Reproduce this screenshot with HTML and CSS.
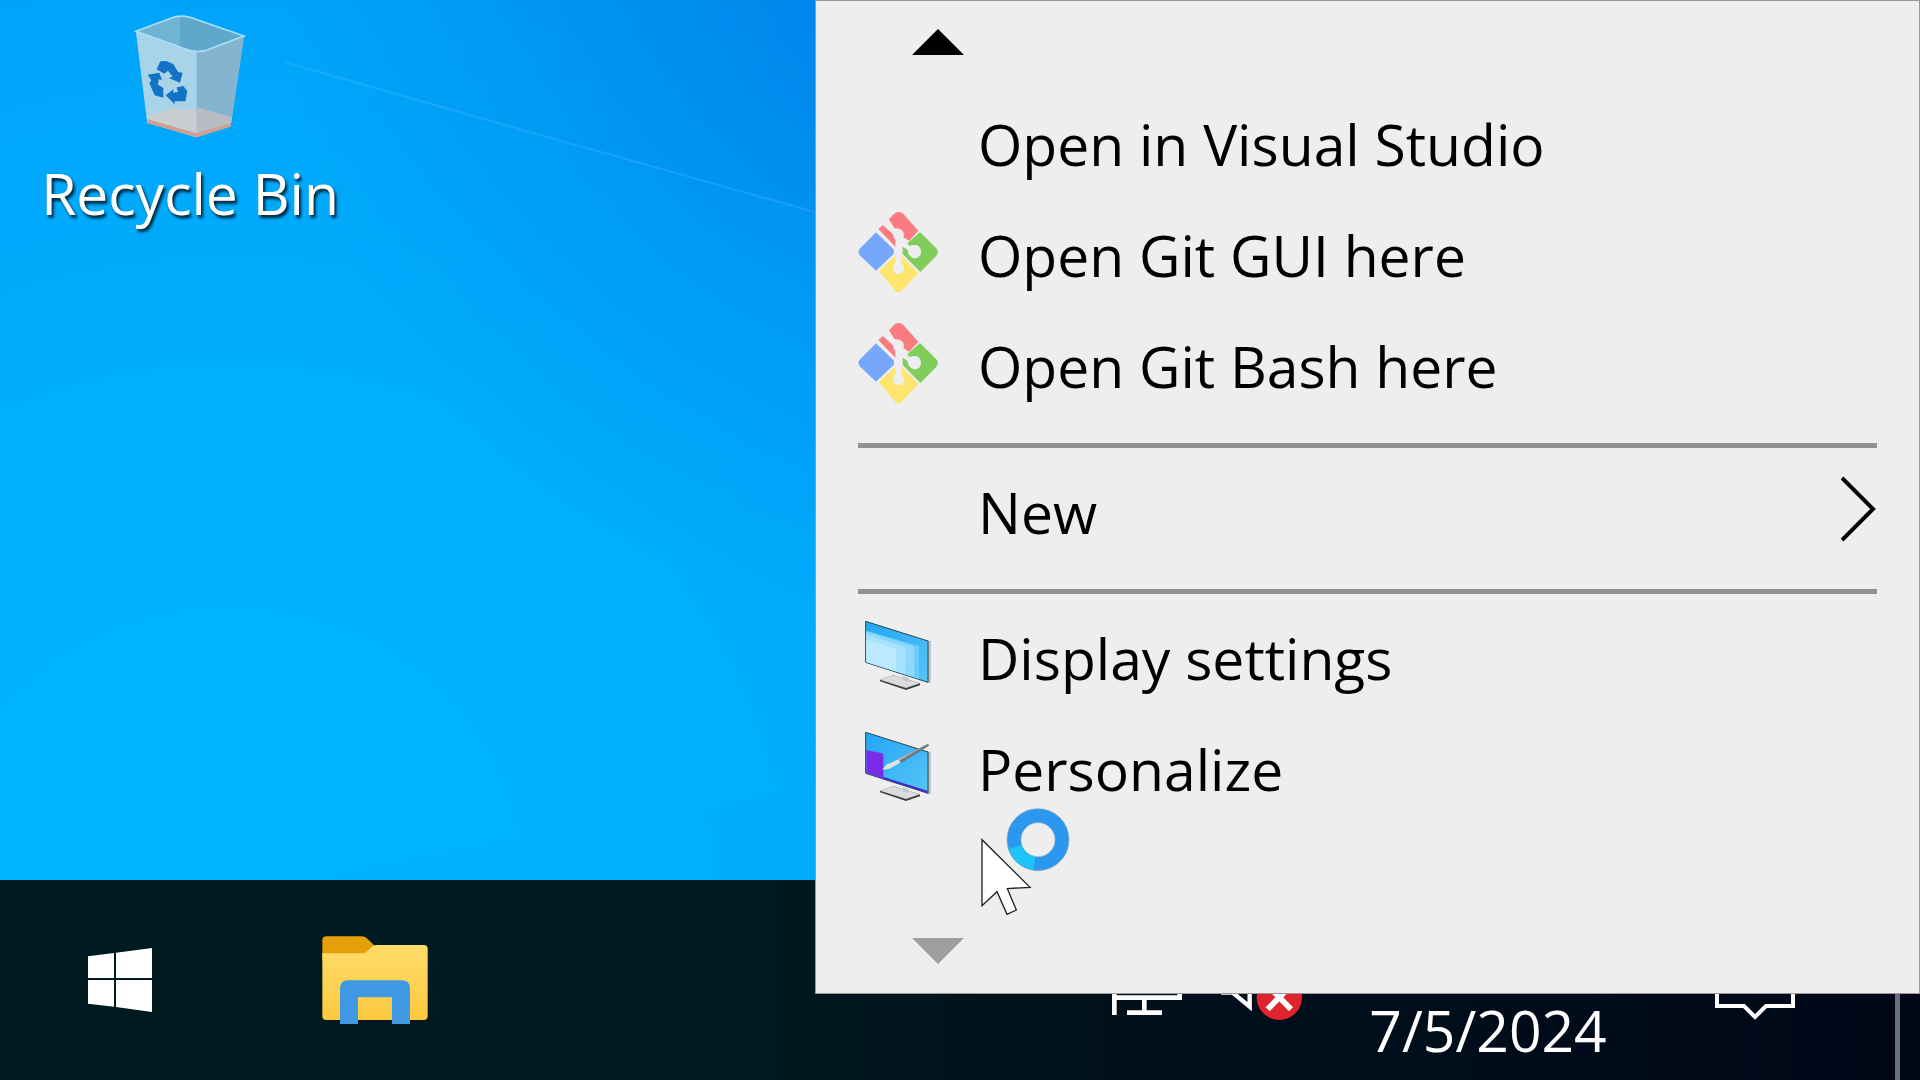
FILE: index.html
```html
<!DOCTYPE html>
<html lang="en">
<head>
  <meta charset="UTF-8" />
  <meta name="viewport" content="width=device-width, initial-scale=1.0" />
  <title>Desktop</title>
  <link rel="stylesheet" href="styles.css">
</head>
<body>

  <main class="desktop">
    <svg class="light-rays" viewBox="0 0 830 880" preserveAspectRatio="none" aria-hidden="true">
      <path d="M0 0H150L286 62L529 131L830 215V880H0Z" fill="#00b4ff" opacity=".1" />
      <path d="M286 62L529 131L830 215" fill="none" stroke="#5cc4ff" stroke-width="2" opacity=".25" />
      <path d="M300 880L830 785V880Z" fill="#0098f0" opacity=".08" />
    </svg>

    <a class="shortcut" href="#recycle-bin">
      <svg class="shortcut-icon" viewBox="399 39 342 384" aria-hidden="true">
        <path d="M408 94L520 52Q544 45 570 52L732 108L692 378L590 412L442 368Z" fill="#a5cfe6" />
        <path d="M408 94L520 52Q544 45 570 52L732 108L615 152Q590 158 565 150Z" fill="#70b3d3" />
        <path d="M540 50L570 52L732 108L615 152Q590 158 540 142Z" fill="#5fa7cb" />
        <path d="M408 94L565 150L590 156V412L442 368Z" fill="#a9d3e9" />
        <path d="M590 156L615 152L732 108L692 378L590 412Z" fill="#85b4ce" />
        <path d="M440 348L520 325L590 330V400L442 358Z" fill="#c9ced3" />
        <path d="M590 322L696 352L692 370L590 400Z" fill="#b9bcc2" />
        <path d="M442 358L590 400L692 370V380L590 412L442 370Z" fill="#cf9f91" />
        <path d="M408 94L520 52Q544 45 570 52L732 108L615 152Q590 158 565 150Z" fill="none" stroke="#a8e0fb" stroke-width="5" />
        <g fill="#1272c4">
          <path d="M470 208L481 184L498 183L520 192L534 216L548 218L540 248L506 234L518 230L504 212L493 221Z" />
          <path d="M443 224L478 218L486 240L476 238L474 254L490 264V293L464 286L448 250L454 240Z" />
          <path d="M497 286L520 268V278L534 276L530 262L550 258L562 274L556 304L524 304V313Z" />
        </g>
      </svg>
      <span class="shortcut-name">Recycle Bin</span>
    </a>
  </main>

  <footer class="taskbar">
    <button class="start-btn" aria-label="Start">
      <svg width="64" height="64" viewBox="144 264 192 192" fill="#fff">
        <path d="M144 289L222 279V354H144ZM228 278L336 264V354H228ZM144 360H222V440L144 431ZM228 360H336V456L228 441Z" />
      </svg>
    </button>
    <button class="task-btn" aria-label="File Explorer">
      <svg width="106" height="88" viewBox="846 227 318 264">
        <defs>
          <linearGradient id="folder" x1="0" y1="0" x2="0" y2="1">
            <stop offset="0" stop-color="#ffdc6a" />
            <stop offset="1" stop-color="#fcc93e" />
          </linearGradient>
        </defs>
        <path d="M847 240Q847 228 859 228H966Q976 228 983 236L1004 256V300H847Z" fill="#e3a008" />
        <path d="M847 279H966Q976 279 984 271L994 261Q1001 254 1010 254H1151Q1163 254 1163 266V467Q1163 479 1151 479H859Q847 479 847 467Z" fill="url(#folder)" />
        <path d="M900 491V385Q900 360 925 360H1085Q1110 360 1110 385V491H1056V411H954V491Z" fill="#3f99e2" />
      </svg>
    </button>

    <div class="tray">
      <button class="tray-btn" aria-label="Network">
        <svg width="72" height="80" viewBox="90 -60 216 240" fill="none" stroke="#fff" stroke-width="14">
          <path d="M100 165V-20H296V113M100 113H303M138 158H243M190 113V158" />
        </svg>
      </button>
      <button class="tray-btn" aria-label="Volume">
        <svg width="82" height="82" viewBox="420 -63 246 246">
          <path d="M506 -40L455 18H426V98H455L506 140Z" fill="none" stroke="#fff" stroke-width="13" />
          <circle cx="595" cy="112" r="68" fill="#e0242b" />
          <path d="M560 76L630 148M630 76L560 148" stroke="#fff" stroke-width="17" />
        </svg>
      </button>
      <button class="clock">7/5/2024</button>
      <button class="notifications" aria-label="Notifications">
        <svg width="84" height="80" viewBox="0 0 84 80" fill="none" stroke="#fff" stroke-width="4">
          <path d="M4 6H80V66H53L42 77L31 66H4Z" />
        </svg>
      </button>
      <button class="show-desktop" aria-label="Show desktop"></button>
    </div>
  </footer>

  <!-- Desktop context menu -->
  <nav class="context-menu">
    <button class="scroll-btn scroll-up" aria-label="Scroll up">
      <svg width="52" height="26" viewBox="0 0 52 26"><path d="M0 26L26 0L52 26Z" fill="#000" /></svg>
    </button>

    <button class="menu-item">
      <span class="menu-icon"></span>
      <span class="menu-label">Open in Visual Studio</span>
    </button>
    <button class="menu-item">
      <svg class="menu-icon" viewBox="54 36 240 240">
        <g id="git">
          <path d="M147 58L164 40Q175 32 188 40L235 92L208 122L190 112Q196 92 178 86L163 84Z" fill="#fb7c80" />
          <path d="M115 87L129 75L160 104Q160 114 166 119V140Z" fill="#fb7c80" />
          <path d="M108 97L160 147Q164 155 160 163L108 212L59 166Q52 155 59 146Z" fill="#76a7fb" />
          <path d="M240 96L289 145Q298 156 289 167L241 216L188 162V140L203 150C205 182 243 182 243 155C243 132 218 132 209 139L202 130Z" fill="#80cd59" />
          <path d="M117 213L166 167V190C150 205 162 222 175 222C190 222 200 205 184 190V167L235 219L182 275Q175 280 168 275Z" fill="#fee56e" />
        </g>
      </svg>
      <span class="menu-label">Open Git GUI here</span>
    </button>
    <button class="menu-item">
      <svg class="menu-icon" viewBox="54 36 240 240"><use href="#git" /></svg>
      <span class="menu-label">Open Git Bash here</span>
    </button>

    <hr class="separator">

    <button class="menu-item">
      <span class="menu-icon"></span>
      <span class="menu-label">New</span>
      <svg class="submenu-arrow" width="36" height="66" viewBox="0 0 36 66" fill="none" stroke="#000" stroke-width="4">
        <path d="M1 2L32 33L1 64" />
      </svg>
    </button>

    <hr class="separator">

    <button class="menu-item">
      <svg class="menu-icon" viewBox="54 45 240 240">
        <defs>
          <linearGradient id="screen" x1="0" y1="0" x2="1" y2="1">
            <stop offset="0" stop-color="#22a4f4" />
            <stop offset="1" stop-color="#56c5f8" />
          </linearGradient>
        </defs>
        <g id="monitor">
          <path d="M264 122L272 122V249L264 249Z" fill="#b9bdc0" />
          <path d="M120 239L160 226L240 250V256L198 270L120 244Z" fill="#3c3f42" />
          <path d="M120 239L160 226L240 250L198 264Z" fill="#d9dbdd" />
          <path d="M188 228L206 234V246L188 240Z" fill="#c3c6c9" />
          <path d="M77 64L264 123V247L77 187Z" fill="url(#screen)" stroke="#24465c" stroke-width="3" />
        </g>
        <path d="M79 92L237 138V237L79 186Z" fill="#6bcbfa" />
        <path d="M79 94L223 140V232L79 186Z" fill="#8dd9fc" />
        <path d="M79 104L196 142V223L79 186Z" fill="#a7e3fd" />
        <path d="M79 120L168 147V214L79 186Z" fill="#bdeafe" />
      </svg>
      <span class="menu-label">Display settings</span>
    </button>
    <button class="menu-item">
      <svg class="menu-icon" viewBox="54 45 240 240">
        <use href="#monitor" />
        <path d="M79 118L124 126Q130 128 130 134V203L262 243V246L79 186Z" fill="#7a2be8" />
        <path d="M130 198L262 239V245L130 203Z" fill="#4026c4" />
        <path d="M126 175C136 170 134 160 150 157L176 144L183 154L158 168C148 176 136 176 126 175Z" fill="#dfe3e6" />
        <path d="M174 144L264 98L267 104L184 156Z" fill="#6c7780" />
        <path d="M174 144L264 98L178 149Z" fill="#aeb8c0" />
      </svg>
      <span class="menu-label">Personalize</span>
    </button>

    <button class="scroll-btn scroll-down" aria-label="Scroll down">
      <svg width="52" height="26" viewBox="0 0 52 26"><path d="M0 0H52L26 26Z" fill="#9f9f9f" /></svg>
    </button>

    <!-- Busy pointer, floats over the menu -->
    <svg class="pointer" viewBox="420 618 276 330" aria-hidden="true">
      <circle cx="594" cy="719" r="72" fill="none" stroke="#2b97ee" stroke-width="42" />
      <path d="M525 741A72 72 0 0 0 583 790" fill="none" stroke="#1cc4f7" stroke-width="42" />
      <circle cx="594" cy="719" r="93" fill="none" stroke="#8aa6bd" stroke-width="2" />
      <circle cx="594" cy="719" r="51" fill="none" stroke="#a5b5c2" stroke-width="2" />
      <path d="M426 719V917L471 875L501 943L529 930L502 866L570 862Z" fill="#fff" stroke="#222" stroke-width="4" />
    </svg>
  </nav>

</body>
</html>
```
FILE: styles.css
```css
* {
  box-sizing: border-box;
}

body {
  margin: 0;
  min-height: 100vh;
  display: flex;
  flex-direction: column;
  position: relative;
  overflow: hidden;
  font-family: 'Segoe UI', 'Open Sans', 'Noto Sans', sans-serif;
  font-size: 57px;
  line-height: 80px;
  color: #000;
}

button {
  border: none;
  padding: 0;
  background: none;
  font: inherit;
  color: inherit;
  cursor: pointer;
}

svg {
  display: block;
  flex-shrink: 0;
}

/* Desktop */
.desktop {
  flex: 1;
  position: relative;
  background:
    radial-gradient(ellipse 32% 70% at 47% 0, rgba(0, 115, 225, 0.6), rgba(0, 130, 230, 0)),
    radial-gradient(ellipse 64% 130% at 12% 100%, #00b8ff 0%, #00b2fe 35%, #00a4fa 75%, #0098f2 100%);
}

.light-rays {
  position: absolute;
  top: 0;
  left: 0;
  width: 43%;
  height: 100%;
}

.shortcut {
  position: relative;
  display: flex;
  flex-direction: column;
  align-items: center;
  gap: 12px;
  width: 380px;
  padding-top: 13px;
  color: #fff;
  text-decoration: none;
}

.shortcut-icon {
  width: 114px;
  height: 128px;
}

.shortcut-name {
  white-space: nowrap;
  text-shadow: 2px 3px 3px rgba(0, 0, 0, 0.8);
}

/* Taskbar */
.taskbar {
  display: flex;
  height: 200px;
  background: linear-gradient(to right, #001a20 0%, #001a20 35%, #00101c 60%, #000818 100%);
  color: #fff;
}

.taskbar button {
  display: flex;
  align-items: center;
  justify-content: center;
}

.start-btn {
  width: 240px;
}

.task-btn {
  width: 270px;
}

.tray {
  display: flex;
  margin-left: auto;
}

.tray-btn {
  margin-right: 38px;
}

.clock {
  width: 274px;
  padding: 100px 0 0 20px;
}

.notifications {
  width: 280px;
}

.show-desktop {
  width: 25px;
  border-left: 5px solid #6a6d7e;
}

/* Context menu */
.context-menu {
  position: absolute;
  top: 0;
  right: 0;
  width: calc(57.5vw + 1px);
  display: flex;
  flex-direction: column;
  padding: 0 42px;
  background-color: #eee;
  border: 1px solid #999;
}

.menu-item {
  display: flex;
  align-items: center;
  gap: 40px;
  height: 111px;
  text-align: left;
}

.menu-icon {
  width: 80px;
  height: 80px;
}

.menu-label {
  flex: 1;
  padding-top: 6px;
  white-space: nowrap;
}

.separator {
  width: 100%;
  height: 5px;
  margin: 25px 0 5px;
  border: none;
  background-color: #929292;
}

.scroll-btn {
  padding-left: 54px;
}

.scroll-up {
  height: 84px;
  padding-bottom: 2px;
}

.scroll-down {
  height: 84px;
  margin-top: 88px;
}

.pointer {
  position: absolute;
  left: 164px;
  top: 805px;
  width: 92px;
  height: 110px;
}
```
